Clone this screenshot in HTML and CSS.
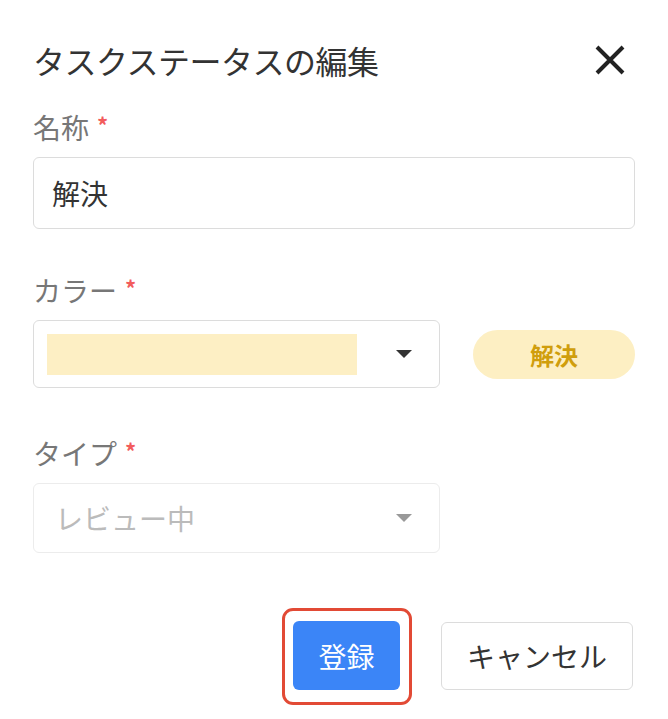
FILE: index.html
```html
<!DOCTYPE html>
<html lang="ja">
<head>
<meta charset="UTF-8">
<meta name="viewport" content="width=device-width, initial-scale=1.0">
<title>タスクステータスの編集</title>
<link rel="stylesheet" href="styles.css">
</head>
<body>
    <div class="dialog">
        <div class="header">
            <h1>タスクステータスの編集</h1>
            <button class="close" aria-label="閉じる">
                <svg width="30" height="30" viewBox="0 0 30 30">
                    <path d="M2 2 L28 28 M28 2 L2 28" stroke="#222" stroke-width="4" stroke-linecap="butt" fill="none"/>
                </svg>
            </button>
        </div>

        <div class="field field-name">
            <label>名称<span class="req">*</span></label>
            <div class="input">解決</div>
        </div>

        <div class="field field-color">
            <label>カラー<span class="req">*</span></label>
            <div class="color-row">
                <div class="select">
                    <span class="swatch"></span>
                    <span class="arrow"></span>
                </div>
                <span class="badge">解決</span>
            </div>
        </div>

        <div class="field field-type">
            <label>タイプ<span class="req">*</span></label>
            <div class="select disabled">
                <span class="value">レビュー中</span>
                <span class="arrow"></span>
            </div>
        </div>

        <div class="footer">
            <span class="highlight">
                <button class="btn btn-primary">登録</button>
            </span>
            <button class="btn btn-default">キャンセル</button>
        </div>
    </div>
</body>
</html>
```

FILE: styles.css
```css
body {
    margin: 0;
    padding: 0;
    background-color: #fff;
    font-family: "Noto Sans CJK JP", "Noto Sans", sans-serif;
    color: #333;
}
.dialog {
    padding: 40px 33px 0 33px;
    width: 602px;
}
.header {
    display: flex;
    justify-content: space-between;
    align-items: center;
    height: 40px;
}
h1 {
    margin: 0;
    font-size: 32px;
    font-weight: normal;
    line-height: 40px;
    color: #333;
    letter-spacing: -0.5px;
}
.close {
    background: none;
    border: none;
    padding: 0;
    margin-right: 10px;
    width: 30px;
    height: 30px;
    cursor: pointer;
}
.close svg {
    display: block;
}
.field label {
    display: block;
    font-size: 28px;
    line-height: 40px;
    height: 40px;
    color: #777;
    margin-bottom: 10px;
}
.req {
    color: #f25c5c;
    font-size: 22px;
    font-weight: bold;
    vertical-align: top;
    line-height: 34px;
    margin-left: 8px;
}
.field-name {
    margin-top: 27px;
}
.field-color {
    margin-top: 41px;
}
.field-type {
    margin-top: 45px;
}
.input {
    box-sizing: border-box;
    height: 72px;
    border: 1px solid #dcdcdc;
    border-radius: 6px;
    padding: 0 18px;
    font-size: 28px;
    line-height: 70px;
    color: #333;
}
.color-row {
    display: flex;
    align-items: center;
}
.select {
    box-sizing: border-box;
    width: 407px;
    height: 68px;
    border: 1px solid #dcdcdc;
    border-radius: 6px;
    display: flex;
    align-items: center;
    padding: 0 27px 0 13px;
}
.swatch {
    width: 310px;
    height: 41px;
    background-color: #fdefc4;
}
.arrow {
    margin-left: auto;
    width: 0;
    height: 0;
    border-left: 8px solid transparent;
    border-right: 8px solid transparent;
    border-top: 8px solid #333;
}
.badge {
    margin-left: 33px;
    flex: 1;
    height: 49px;
    border-radius: 25px;
    background-color: #fdefc3;
    color: #d09e0c;
    font-size: 24px;
    font-weight: bold;
    display: flex;
    align-items: center;
    justify-content: center;
}
.select.disabled {
    height: 70px;
    border-color: #ececec;
    padding-left: 21px;
}
.select.disabled .value {
    font-size: 28px;
    color: #bbb;
}
.select.disabled .arrow {
    border-top-color: #999;
}
.footer {
    display: flex;
    justify-content: flex-end;
    align-items: flex-start;
    margin-top: 55px;
    margin-right: 2px;
    gap: 29px;
}
.highlight {
    display: block;
    border: 3px solid #e24a35;
    border-radius: 11px;
    padding: 10px 9px 12px 8px;
}
.btn {
    display: block;
    font-family: inherit;
    font-size: 28px;
    height: 69px;
    border-radius: 6px;
    cursor: pointer;
    padding: 0 24px;
    line-height: 1;
}
.btn-primary {
    background-color: #3b85f7;
    color: #fff;
    border: none;
    width: 107px;
}
.btn-default {
    background-color: #fff;
    color: #333;
    border: 1px solid #dcdcdc;
    width: 192px;
    height: 68px;
    margin-top: 14px;
}
```
